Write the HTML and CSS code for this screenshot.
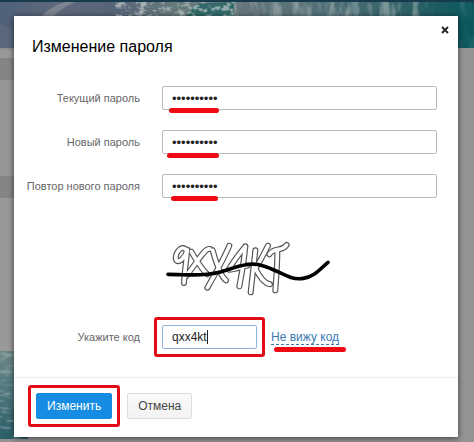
FILE: index.html
```html
<!DOCTYPE html>
<html lang="ru">
<head>
<meta charset="utf-8">
<meta name="viewport" content="width=device-width, initial-scale=1">
<title>Изменение пароля</title>
<link rel="stylesheet" href="styles.css">
</head>
<body>
<div class="backdrop" aria-hidden="true">
  <div class="topbar"></div>
  <svg class="hero" viewBox="0 0 474 46" preserveAspectRatio="none">
    <defs>
      <linearGradient id="sky" x1="0" x2="1">
        <stop offset="0" stop-color="#4f6078"/><stop offset=".12" stop-color="#5e6a7c"/>
        <stop offset=".25" stop-color="#566478"/><stop offset=".37" stop-color="#667b7d"/>
        <stop offset=".5" stop-color="#66777c"/><stop offset=".7" stop-color="#506f77"/>
        <stop offset=".87" stop-color="#2b6065"/><stop offset="1" stop-color="#07575c"/>
      </linearGradient>
      <filter id="foam" x="0" y="0" width="1" height="1">
        <feTurbulence type="fractalNoise" baseFrequency=".13 .2" numOctaves="3" seed="4"/>
        <feColorMatrix values="0 0 0 0 .56  0 0 0 0 .59  0 0 0 0 .58  5 0 0 0 -2.4"/>
      </filter>
      <filter id="spray" x="0" y="0" width="1" height="1">
        <feTurbulence type="fractalNoise" baseFrequency=".1 .03" numOctaves="3" seed="7"/>
        <feColorMatrix values="0 0 0 0 .5  0 0 0 0 .55  0 0 0 0 .56  4 0 0 0 -1.9"/>
      </filter>
    </defs>
    <rect width="474" height="46" fill="url(#sky)"/>
    <path d="M42 14Q50 5 64 0H76Q62 5 54 14Z" fill="#7c8490"/>
    <path d="M0 22Q8 24 14 32V46H0Z" fill="#59697b"/>
    <path d="M186 14L196 2L234 0V14Z" fill="#0d5f5d" opacity=".6"/>
    <rect x="115" width="119" height="14" filter="url(#foam)" opacity=".7"/>
    <rect x="234" width="200" height="14" filter="url(#spray)" opacity=".5"/>
    <rect x="458" width="16" height="46" filter="url(#spray)" opacity=".14"/>
  </svg>
  <div class="side side-left">
    <div class="strip strip-head"></div>
    <div class="strip strip-tab"></div>
    <div class="strip strip-gap"></div>
    <div class="strip strip-tab"></div>
    <div class="strip strip-rest"></div>
    <svg class="water" viewBox="0 0 28 90" preserveAspectRatio="none">
      <defs>
        <linearGradient id="sea" x1="0" y1="0" x2="0" y2="1">
          <stop offset="0" stop-color="#6f8485"/><stop offset=".35" stop-color="#557b80"/><stop offset="1" stop-color="#2b5e68"/>
        </linearGradient>
        <filter id="ripple" x="0" y="0" width="1" height="1">
          <feTurbulence type="fractalNoise" baseFrequency=".08 .3" numOctaves="2" seed="3"/>
          <feColorMatrix values="0 0 0 0 .5  0 0 0 0 .62  0 0 0 0 .62  4 0 0 0 -2"/>
        </filter>
      </defs>
      <rect width="28" height="90" fill="url(#sea)"/>
      <rect width="28" height="90" filter="url(#ripple)" opacity=".35"/>
    </svg>
  </div>
  <div class="side side-right"></div>
</div>

<main class="dialog" role="dialog" aria-labelledby="title">
  <form>
    <header class="header">
      <h1 class="title" id="title">Изменение пароля</h1>
      <button class="close" type="button" aria-label="Закрыть">
        <svg width="8" height="8" viewBox="0 0 8 8"><path d="M1 1L7 7M7 1L1 7" stroke="#222" stroke-width="1.8"/></svg>
      </button>
    </header>
    <div class="row">
      <label for="current">Текущий пароль</label>
      <div class="field"><input class="input" id="current" type="password" value="qwerty1234"><span class="mark mark-current"></span></div>
    </div>
    <div class="row">
      <label for="new">Новый пароль</label>
      <div class="field"><input class="input" id="new" type="password" value="qwerty1234"><span class="mark mark-new"></span></div>
    </div>
    <div class="row">
      <label for="repeat">Повтор нового пароля</label>
      <div class="field"><input class="input" id="repeat" type="password" value="qwerty1234"><span class="mark mark-repeat"></span></div>
    </div>
    <div class="captcha">
      <svg width="168" height="60" viewBox="0 0 504 180" role="img" aria-label="Код на картинке" fill="none" stroke-linecap="round" stroke-linejoin="round">
        <g stroke="#555" stroke-width="18">
          <path d="M62 34C48 14 26 42 30 62C36 76 58 56 64 32C60 70 55 105 54 132"/>
          <path d="M76 38C90 62 104 88 124 106M132 30C116 26 98 64 60 112"/>
          <path d="M140 34C150 70 164 112 180 124M190 20C174 58 146 108 124 146"/>
          <path d="M238 22C220 44 202 66 188 92C204 92 226 84 244 80M238 22C234 70 226 110 220 142"/>
          <path d="M268 34C264 76 258 120 254 160M306 20C292 48 280 72 268 88C280 112 296 134 312 136"/>
          <path d="M310 46C326 22 346 40 362 18M334 38C334 80 330 124 328 154"/>
        </g>
        <g stroke="#fff" stroke-width="11">
          <path d="M62 34C48 14 26 42 30 62C36 76 58 56 64 32C60 70 55 105 54 132"/>
          <path d="M76 38C90 62 104 88 124 106M132 30C116 26 98 64 60 112"/>
          <path d="M140 34C150 70 164 112 180 124M190 20C174 58 146 108 124 146"/>
          <path d="M238 22C220 44 202 66 188 92C204 92 226 84 244 80M238 22C234 70 226 110 220 142"/>
          <path d="M268 34C264 76 258 120 254 160M306 20C292 48 280 72 268 88C280 112 296 134 312 136"/>
          <path d="M310 46C326 22 346 40 362 18M334 38C334 80 330 124 328 154"/>
        </g>
        <path d="M6 106C60 106 104 114 160 100C204 88 246 66 290 80C336 92 370 126 412 118C446 114 466 86 486 70" stroke="#000" stroke-width="11"/>
      </svg>
    </div>
    <div class="row row-code">
      <label for="code">Укажите код</label>
      <div class="code-group">
        <div class="frame"><input class="input input-code" id="code" type="text" value="qxx4kt"><span class="caret"></span></div>
        <div class="field"><a class="hint" href="#">Не вижу код</a><span class="mark mark-hint"></span></div>
      </div>
    </div>
    <footer class="footer">
      <div class="frame"><button class="btn btn-primary" type="submit">Изменить</button></div>
      <button class="btn" type="button">Отмена</button>
    </footer>
  </form>
</main>
</body>
</html>
```

FILE: styles.css
```css
* { box-sizing: border-box; }

body {
  margin: 0;
  min-height: 100vh;
  display: grid;
  background: #929292;
  font: 12px/16px "Liberation Sans", Arial, sans-serif;
  color: #666;
}

/* Dimmed page behind the dialog */
.backdrop {
  grid-area: 1 / 1;
  display: grid;
  grid-template: 2px 46px 1fr / 28px 1fr 16px;
}
.topbar { grid-column: 1 / -1; background: #173b4c; }
.hero { grid-column: 1 / -1; width: 100%; height: 46px; }
.side { display: flex; flex-direction: column; }
.side-left { grid-column: 1; padding-bottom: 3px; }
.side-right { grid-column: 3; background: #949494; }
.strip-head { height: 10px; background: #999; border-top: 2px solid #8b8f92; }
.strip-tab { height: 22px; background: #858585; }
.strip-gap { height: 96px; background: #969696; }
.strip-rest { flex: 1; background: #999; }
.water { width: 100%; height: 88px; }

/* Dialog */
.dialog {
  grid-area: 1 / 1;
  position: relative;
  align-self: start;
  margin: 16px 16px 4px 14px;
  background: #fff;
  box-shadow: 0 1px 6px rgba(0, 0, 0, .6);
}
.header {
  display: flex;
  justify-content: space-between;
  align-items: flex-start;
  padding: 9px 9px 0 18px;
  height: 70px;
}
.title { margin: 12px 0 0; font-size: 16px; line-height: 20px; font-weight: 400; color: #000; }
.close { display: flex; padding: 0; border: 0; background: none; margin: 1px 0 0; }

.row {
  display: grid;
  grid-template-columns: 126px 1fr;
  column-gap: 22px;
  align-items: center;
  padding-right: 21px;
  margin-bottom: 20px;
}
.row label { font-size: 11px; text-align: right; white-space: nowrap; }
.field { position: relative; }
.input {
  display: block;
  width: 100%;
  height: 24px;
  padding: 0 9px;
  border: 1px solid #bbb;
  border-radius: 2px;
  background: #fff;
  font: 13px/16px "Liberation Sans", Arial, sans-serif;
  color: #222;
}

/* Red highlighter marks */
.mark { position: absolute; height: 5px; border-radius: 3px; background: #ee0a12; }
.mark-current { left: 7px; top: 22px; width: 50px; }
.mark-new { left: 5px; top: 23px; width: 52px; }
.mark-repeat { left: 9px; top: 22px; width: 47px; }
.mark-hint { left: 3px; top: 18px; width: 72px; }
.frame { position: relative; padding: 5px; border: 3px solid #e20c16; border-radius: 3px; }

.captcha { padding-left: 152px; margin-top: 41px; height: 78px; }
.captcha svg { display: block; }

.row-code { column-gap: 14px; margin-bottom: 20px; }
.code-group { display: flex; align-items: center; gap: 6px; }
.input-code { width: 95px; border-color: #8fb4df; font-size: 12px; }
.caret { position: absolute; left: 50px; top: 10px; width: 1px; height: 14px; background: #222; }
.hint { color: #3c78b4; white-space: nowrap; border-bottom: 1px dashed #3c78b4; text-decoration: none; }

.footer {
  display: flex;
  align-items: center;
  gap: 7px;
  padding: 7px 14px 10px;
  border-top: 1px solid #eee;
}
.btn {
  height: 26px;
  padding: 0 10px;
  border: 1px solid #ddd;
  border-radius: 2px;
  background: linear-gradient(#fafafa, #f2f2f2);
  font: 12px/16px "Liberation Sans", Arial, sans-serif;
  color: #444;
}
.btn-primary { display: block; border-color: #168de2; background: #168de2; color: #fff; }
```
